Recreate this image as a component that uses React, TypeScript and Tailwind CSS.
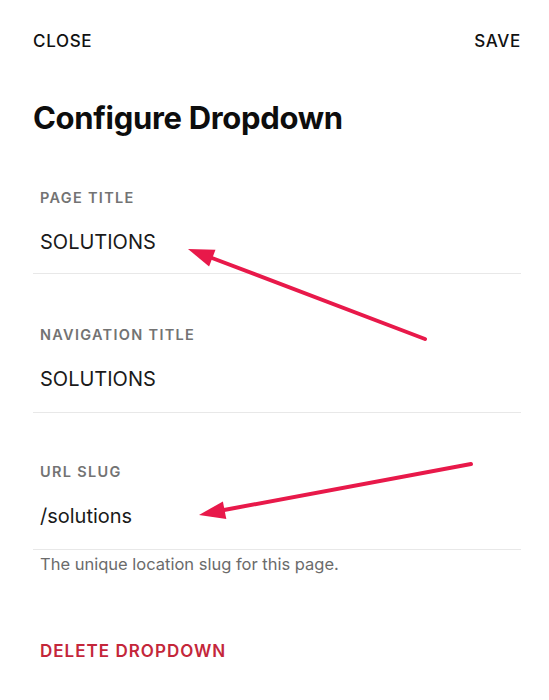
const fields = [
	{ label: "PAGE TITLE", value: "SOLUTIONS", spacing: "pt-0 pb-[17px]" },
	{ label: "NAVIGATION TITLE", value: "SOLUTIONS", spacing: "pt-[51px] pb-[19px]" },
	{ label: "URL SLUG", value: "/solutions", spacing: "pt-[49px] pb-[19px]" },
];

function Field({ label, value, spacing }: { label: string; value: string; spacing: string }) {
	return (
		<div className={`border-b border-[#e8e8e8] px-[7px] ${spacing}`}>
			<p className="text-[14.5px] leading-[20px] font-semibold tracking-[0.09em] text-[#737373]">{label}</p>
			<p className="mt-[20px] text-[20px] leading-[28px] text-[#1a1a1a]">{value}</p>
		</div>
	);
}

function Arrows() {
	return (
		<svg className="pointer-events-none absolute inset-0" width="549" height="700" viewBox="0 0 549 700">
			<line x1="425" y1="339" x2="212" y2="258" stroke="#e8194a" strokeWidth="4" strokeLinecap="round" />
			<polygon points="188,249 215.5,249.8 209.1,266.6" fill="#e8194a" />
			<line x1="471" y1="464" x2="224" y2="510" stroke="#e8194a" strokeWidth="4" strokeLinecap="round" />
			<polygon points="199,515 226.3,519 222.9,501.4" fill="#e8194a" />
		</svg>
	);
}

export default function App() {
	return (
		<div
			className="relative h-[700px] w-[549px] overflow-hidden bg-white"
			style={{ fontFamily: "Inter, 'Liberation Sans', sans-serif" }}
		>
			<div className="pl-[33px] pr-[28px] pt-[29px]">
				<div className="flex items-center justify-between text-[17px] leading-[24px] font-medium tracking-[0.04em] text-[#111]">
					<span>CLOSE</span>
					<span>SAVE</span>
				</div>

				<h1 className="mt-[46px] text-[31px] leading-[38px] font-bold tracking-[-0.01em] text-[#0d0d0d]">
					Configure Dropdown
				</h1>

				<div className="mt-[51px]">
					{fields.map((field) => (
						<Field key={field.label} label={field.label} value={field.value} spacing={field.spacing} />
					))}
				</div>

				<p className="mt-[2px] px-[7px] text-[16.5px] leading-[24px] text-[#6b6b6b]">
					The unique location slug for this page.
				</p>

				<p className="mt-[63px] px-[7px] text-[17px] leading-[24px] font-semibold tracking-[0.06em] text-[#c4263a]">
					DELETE DROPDOWN
				</p>
			</div>

			<Arrows />
		</div>
	);
}
